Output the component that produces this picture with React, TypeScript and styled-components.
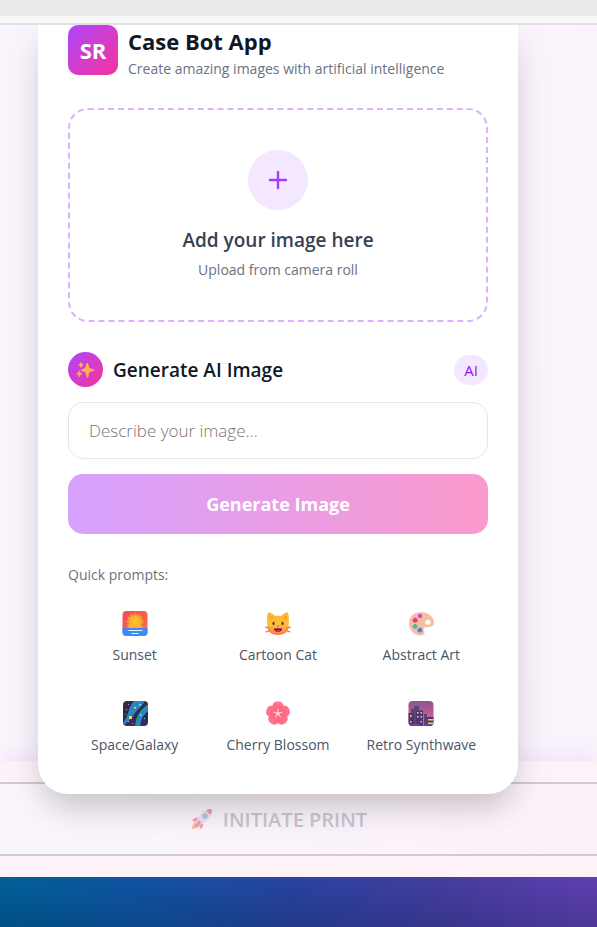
import React from "react";
import styled, { createGlobalStyle } from "styled-components";

const GlobalStyle = createGlobalStyle`
  *, *::before, *::after { box-sizing: border-box; }
  body {
    margin: 0;
    background: linear-gradient(100deg, #faf5fd, #faf3fb);
    font-family: "Open Sans", "Noto Sans", sans-serif;
    color: #101828;
  }
  button, input { font-family: inherit; }
  h1, h2, p { margin: 0; }
`;

const Page = styled.div`
  display: flex;
  flex-direction: column;
  min-height: 100vh;
  overflow-x: hidden;
`;

const TopBar = styled.header`
  position: relative;
  z-index: 2;
  height: 25px;
  background: #f8f8f8;
  border-top: 16px solid #e8ebe9;
  border-bottom: 2px solid #e1e1e1;
`;

const Stage = styled.main`
  position: relative;
  z-index: 1;
  display: flex;
  justify-content: center;
  padding: 0 79px 0 38px;
`;

const Card = styled.section`
  width: 100%;
  max-width: 480px;
  padding: 0 30px 30px;
  background: #fff;
  border-radius: 0 0 30px 30px;
  box-shadow: 0 20px 30px -8px rgba(0, 0, 0, 0.15), 0 10px 40px rgba(0, 0, 0, 0.08);
`;

const CardHeader = styled.div`
  display: flex;
  gap: 10px;
  margin-bottom: 27px;
`;

const Logo = styled.div`
  display: grid;
  place-items: center;
  flex: none;
  width: 50px;
  height: 50px;
  border-radius: 10px;
  background: linear-gradient(135deg, #ad46ff, #f6339a);
  color: #fff;
  font-size: 22px;
  font-weight: 700;
`;

const Title = styled.h1`
  font-size: 22px;
  line-height: 32px;
  font-weight: 700;
`;

const Muted = styled.p<{ $lh?: number }>`
  font-size: 14px;
  line-height: ${(p) => p.$lh ?? 24}px;
  color: #6a7282;
`;

const DropZone = styled.button`
  display: flex;
  flex-direction: column;
  align-items: center;
  width: 100%;
  padding: 40px 20px;
  border: 2px dashed #dab2ff;
  border-radius: 20px;
  background: #fff;
  cursor: pointer;
`;

const PlusCircle = styled.span`
  display: grid;
  place-items: center;
  width: 60px;
  height: 60px;
  margin-bottom: 18px;
  border-radius: 50%;
  background: #f3e8ff;
`;

const DropTitle = styled.span`
  margin-bottom: 8px;
  font-size: 19px;
  line-height: 24px;
  font-weight: 600;
  color: #364153;
`;

const DropHint = styled.span`
  font-size: 14px;
  line-height: 20px;
  color: #6a7282;
`;

const SectionHeader = styled.div`
  display: flex;
  align-items: center;
  gap: 10px;
  margin: 30px 0 15px;
`;

const SparkBadge = styled.span`
  display: grid;
  place-items: center;
  width: 35px;
  height: 35px;
  border-radius: 50%;
  background: linear-gradient(135deg, #ad46ff, #f6339a);
`;

const SectionTitle = styled.h2`
  flex: 1;
  font-size: 19px;
  line-height: 28px;
  font-weight: 600;
`;

const Pill = styled.span`
  padding: 5px 10px;
  border-radius: 15px;
  background: #f3e8ff;
  color: #9810fa;
  font-size: 15px;
  line-height: 20px;
`;

const PromptInput = styled.input`
  display: block;
  width: 100%;
  height: 57px;
  padding: 0 20px;
  border: 1px solid #e5e7eb;
  border-radius: 15px;
  background: #fff;
  font-size: 17px;
  font-weight: 300;
  &::placeholder { color: #757575; opacity: 1; }
`;

const GenerateButton = styled.button`
  width: 100%;
  height: 60px;
  margin: 15px 0 30px;
  border: 0;
  border-radius: 15px;
  background: linear-gradient(90deg, #d6a2ff, #fb99cc);
  color: #fff;
  font-size: 18px;
  font-weight: 700;
`;

const PromptGrid = styled.div`
  display: grid;
  grid-template-columns: repeat(3, 1fr);
  gap: 10px;
  margin-top: 8px;
`;

const PromptButton = styled.button`
  display: flex;
  flex-direction: column;
  align-items: center;
  gap: 8px;
  padding: 15px 0 9px;
  border: 0;
  border-radius: 12px;
  background: transparent;
  color: #4a5565;
  font-size: 14px;
  line-height: 20px;
  white-space: nowrap;
  cursor: pointer;
`;

const Icon = styled.svg<{ $size: number }>`
  display: block;
  width: ${(p) => p.$size}px;
  height: ${(p) => p.$size}px;
`;

const Footer = styled.footer`
  margin-top: -33px;
  padding: 21px 0;
  background: #fdf2f8;
  box-shadow: 0 -4px 20px rgba(120, 90, 220, 0.1);
`;

const PrintButton = styled.button`
  display: flex;
  align-items: center;
  justify-content: center;
  gap: 10px;
  width: 100%;
  height: 74px;
  padding: 0 39px 0 0;
  border: solid #cccad6;
  border-width: 2px 0;
  background: linear-gradient(90deg, #f9f5fc, #fcf1f9);
  color: #c7c6d0;
  font-size: 20px;
  font-weight: 600;
`;

const Faded = styled.span`
  opacity: 0.5;
`;

const BottomBand = styled.div`
  flex: 1;
  min-height: 50px;
  background:
    linear-gradient(180deg, transparent, rgba(0, 20, 50, 0.2)),
    linear-gradient(90deg, #006098, #1053a4 25%, #2a439f 50%, #463da2 75%, #6040b0);
`;

const Sunset = () => (
  <Icon $size={28} viewBox="0 0 28 28" aria-hidden="true">
    <defs>
      <linearGradient id="sky" x1="0" y1="0" x2="1" y2="1">
        <stop stopColor="#f2485b" /><stop offset="1" stopColor="#ff743c" />
      </linearGradient>
      <radialGradient id="sun"><stop stopColor="#ffc62e" /><stop offset="1" stopColor="#f9a62c" /></radialGradient>
      <clipPath id="sunsetClip"><rect x="1.500" y="2" width="25" height="25" rx="4" /></clipPath>
    </defs>
    <g clipPath="url(#sunsetClip)">
      <path fill="url(#sky)" d="M0 0h28v28H0z" />
      <circle cx="14" cy="12.500" r="6.600" fill="url(#sun)" />
      <circle cx="14" cy="12.500" r="7.300" fill="none" stroke="#faa52b" strokeWidth="1.600" strokeDasharray="2.400 1.200" />
      <path fill="#3d8bf5" d="M0 19h28v9H0z" />
      <path fill="#ffb340" d="M6 19c0-2 2-3 4-3h8c2 0 4 1 4 3z" opacity=".7" />
      <path stroke="#e7f2ff" strokeWidth="1.200" strokeLinecap="round" d="M8 21.500h13M11 24.500h6" />
    </g>
  </Icon>
);

const Cat = () => (
  <Icon $size={28} viewBox="0 0 28 28" aria-hidden="true">
    <defs>
      <linearGradient id="fur" x1="0" y1="0" x2="0" y2="1">
        <stop stopColor="#fcb52e" /><stop offset=".55" stopColor="#ffc139" /><stop offset="1" stopColor="#ff7652" />
      </linearGradient>
    </defs>
    <path fill="url(#fur)" d="M4 4c1-1.500 5 1 7 3 2-.5 4-.5 6 0 2-2 6-4.500 7-3 1 2 1 7.500.8 11.500C25 22.500 21 26 14 26S3 22.500 3.200 15.500C3 11.500 3 6 4 4z" />
    <path fill="#e9872b" d="M5 6.500c2 .5 3.500 1 4.500 2.200L5.300 11zM23 6.500c-2 .5-3.500 1-4.500 2.200l4.200 2.300z" opacity=".3" />
    <path stroke="#ee6848" strokeWidth="1.100" strokeLinecap="round" d="m1.500 18 4 1.200M2 23l3.800-1.500M26.500 18l-4 1.200M26 23l-3.800-1.500" />
    <ellipse cx="9.500" cy="14.500" rx="1.100" ry="1.700" fill="#50372c" />
    <ellipse cx="18.500" cy="14.500" rx="1.100" ry="1.700" fill="#50372c" />
    <path fill="#ed3f80" d="M12.500 16.500h3L14 18z" />
    <path fill="#681834" d="M10 19c1.800.8 2.800.6 4 0 1.200.6 2.200.8 4 0 0 2.600-1.800 4-4 4s-4-1.400-4-4z" />
    <path fill="#f44683" d="M12 21.500c1-.8 3-.8 4 0-.6 1.300-3.400 1.300-4 0z" />
  </Icon>
);

const Palette = () => (
  <Icon $size={28} viewBox="0 0 28 28" aria-hidden="true">
    <path fill="#fabda1" fillRule="evenodd" d="M13.500 3C7 3 2 8 2 14.500c0 7 5.500 12 12 12 2.500 0 3.500-1.200 3.500-2.800 0-1.500-1-2.200-1-3.500 0-1.400 1-2 2.700-2 4.300 0 7.800-1 7.800-4.500C27 7.500 20.500 3 13.500 3zM21 10.800a2.600 2.500 0 1 1 0 5 2.600 2.500 0 0 1 0-5z" />
    <rect x="11" y="5" width="4" height="4" rx="1" fill="#b855e3" />
    <path fill="#ed367c" d="m8 8.500 2.300 1.200.3 2.500-2 1.600-2.600-.8-.5-2.500z" />
    <path fill="#4db5a2" d="m8 14.800 2.200 1.200.2 2.400-2 1.500-2.400-.9-.6-2.400z" />
    <path fill="#368de8" d="m12.800 18.500 2.300 1.200.3 2.500-2 1.600-2.600-.8-.5-2.500z" />
  </Icon>
);

const Galaxy = () => (
  <Icon $size={28} viewBox="0 0 28 28" aria-hidden="true">
    <defs>
      <clipPath id="galaxyClip"><rect x="2" y="2" width="25" height="25" rx="4" /></clipPath>
      <linearGradient id="night" x1="0" y1="0" x2="0" y2="1"><stop offset=".6" stopColor="#302c42" /><stop offset="1" stopColor="#44256e" /></linearGradient>
    </defs>
    <g clipPath="url(#galaxyClip)">
      <path fill="url(#night)" d="M0 0h28v28H0z" />
      <path fill="#2887bd" d="M14 1h10c-1 4-3.500 6-6.500 9C13 14 12 20 3 25.500L2 24c4-5 4-8 6-13 1-3 3-7 6-10z" />
      <path fill="#2887bd" d="M28 5v7c-4 1.500-8 7-9 16h-5C14.500 17 20 9 28 5z" />
      <path fill="#ffd146" d="M8 17h3v3H8zM13 8h2v1.500h-2z" />
      <path fill="#6ed9f5" d="M18 5h2v1.500h-2zM19 15h1.500v2H19zM5 10h1v1H5zM7 22h1v1H7zM23 19h1v1h-1z" />
      <path fill="#b17be8" d="M4 15h1v1H4zM7 5h1v1H7zM11 24h1v1h-1z" />
    </g>
  </Icon>
);

const angles = [0, 72, 144, 216, 288];

const Blossom = () => (
  <Icon $size={28} viewBox="0 0 28 28" aria-hidden="true">
    <defs>
      <linearGradient id="petal" x1="0" y1="1" x2="0" y2="0"><stop stopColor="#ff5a70" /><stop offset="1" stopColor="#ff7890" /></linearGradient>
    </defs>
    <g fill="url(#petal)">
      {angles.map((a) => (
        <path key={a} transform={`rotate(${a} 14 14.5)`} d="M14 16c-3-1.500-5.600-5-5.600-8.500C8.400 4.200 11 2 14 2.500c3-.5 5.600 1.700 5.600 5C19.600 11 17 14.500 14 16z" />
      ))}
    </g>
    <g stroke="#ffd1e6" strokeWidth="1.200" strokeLinecap="round">
      {angles.map((a) => (
        <path key={a} transform={`rotate(${a} 14 14.5)`} d="M14 14v-3.500" />
      ))}
    </g>
    <circle cx="14" cy="14.500" r="1.800" fill="#ffd1ea" />
  </Icon>
);

const City = () => (
  <Icon $size={28} viewBox="0 0 28 28" aria-hidden="true">
    <defs>
      <linearGradient id="dusk" x1="0" y1="0" x2="0" y2="1"><stop stopColor="#7c5591" /><stop offset=".7" stopColor="#d75e92" /></linearGradient>
      <clipPath id="cityClip"><rect x="1.500" y="2" width="25" height="25" rx="4" /></clipPath>
    </defs>
    <g clipPath="url(#cityClip)">
      <path fill="url(#dusk)" d="M0 0h28v28H0z" />
      <path fill="#5d4478" d="M4 10h3V7h5v21H4zM17 15h3v13h-3z" />
      <path fill="#4d3673" d="M1 14h6v14H1zM9 11h7v17H9zM20 18h8v10h-8z" />
      <path fill="#63478d" d="M1 25h12v3H1zM18 25h10v3H18zM9 11h7v1H9z" />
      <path fill="#ffcb65" d="M3 16h1.500v2H3zM3 22h1.500v1.500H3zM10 13h1.500v1.500H10zM13.500 13H15v1.500h-1.500zM10 17h1.500v1.500H10zM13.500 17H15v1.500h-1.500zM13.500 22H15v1.500h-1.500zM21 20h6v1.500h-6zM21 23.500h6V25h-6z" />
    </g>
  </Icon>
);

const Sparkles = () => (
  <Icon $size={19} viewBox="0 0 20 20" aria-hidden="true">
    <defs>
      <linearGradient id="gold" x1="0" y1="0" x2="0" y2="1"><stop stopColor="#ffc343" /><stop offset="1" stopColor="#fb9d64" /></linearGradient>
    </defs>
    <path fill="url(#gold)" d="M12 3c1.100 0 1.400 4.500 2.400 5.500s5.100 1.200 5.100 2.200-4.100 1.300-5.100 2.300S13.100 19 12 19s-1.500-5-2.500-6-4.300-1.300-4.300-2.300 3.300-1.200 4.300-2.200S10.900 3 12 3zM5.300 2c.5 0 .6 1.800 1 2.200s2 .5 2 1-1.600.6-2 1-.5 2.200-1 2.200-.6-1.800-1-2.200-2-.5-2-1 1.600-.6 2-1 .5-2.200 1-2.200zM3.500 11c.7 0 .8 2 1.300 2.500s2.100.5 2.100 1.100-1.600.6-2.100 1.100-.6 2.500-1.300 2.500-.8-2-1.300-2.500-2-.5-2-1.100 1.500-.6 2-1.100.6-2.500 1.300-2.500z" />
  </Icon>
);

const Rocket = () => (
  <Icon $size={22} viewBox="0 0 22 22" aria-hidden="true">
    <path fill="#f69a3b" d="M4 14c-2 1-3 4-3 7 3 0 6-1 7-3z" />
    <path fill="#f2457f" d="M8 10c-4-1-6 1-7 3l5 1zM12 14c1 4-1 6-3 7l-1-5z" />
    <path fill="#dcd3ea" d="M21 1c-7 0-11 4-14 9-1 2-2 4-2 5l2 2c2 0 4-1 6-2 5-3 8-7 8-14z" />
    <path fill="#eb4167" d="M21 1c-2 0-4 .4-5.500 1 .5 2 2 4 4.500 4.500.7-1.800 1-3.500 1-5.500zM8 12l2.500 2.500L6 19l-3-.5z" />
    <circle cx="14" cy="8" r="2.800" fill="#8c83ab" />
    <circle cx="14" cy="8" r="2" fill="#48a9ef" />
  </Icon>
);

const prompts = [
  { label: "Sunset", Art: Sunset },
  { label: "Cartoon Cat", Art: Cat },
  { label: "Abstract Art", Art: Palette },
  { label: "Space/Galaxy", Art: Galaxy },
  { label: "Cherry Blossom", Art: Blossom },
  { label: "Retro Synthwave", Art: City },
];

export default function App() {
  return (
    <>
      <GlobalStyle />
      <Page>
        <TopBar />
        <Stage>
          <Card>
            <CardHeader>
              <Logo>SR</Logo>
              <div>
                <Title>Case Bot App</Title>
                <Muted>Create amazing images with artificial intelligence</Muted>
              </div>
            </CardHeader>

            <DropZone type="button">
              <PlusCircle>
                <Icon $size={20} viewBox="0 0 20 20" aria-hidden="true">
                  <path stroke="#a53df0" strokeWidth="2.400" strokeLinecap="round" d="M10 2v16M2 10h16" />
                </Icon>
              </PlusCircle>
              <DropTitle>Add your image here</DropTitle>
              <DropHint>Upload from camera roll</DropHint>
            </DropZone>

            <SectionHeader>
              <SparkBadge><Sparkles /></SparkBadge>
              <SectionTitle>Generate AI Image</SectionTitle>
              <Pill>AI</Pill>
            </SectionHeader>

            <PromptInput type="text" aria-label="Describe your image" placeholder="Describe your image..." />
            <GenerateButton type="button">Generate Image</GenerateButton>

            <Muted $lh={22}>Quick prompts:</Muted>
            <PromptGrid>
              {prompts.map(({ label, Art }) => (
                <PromptButton type="button" key={label}>
                  <Art />
                  {label}
                </PromptButton>
              ))}
            </PromptGrid>
          </Card>
        </Stage>
        <Footer>
          <PrintButton type="button">
            <Faded><Rocket /></Faded>
            INITIATE PRINT
          </PrintButton>
        </Footer>
        <BottomBand />
      </Page>
    </>
  );
}
